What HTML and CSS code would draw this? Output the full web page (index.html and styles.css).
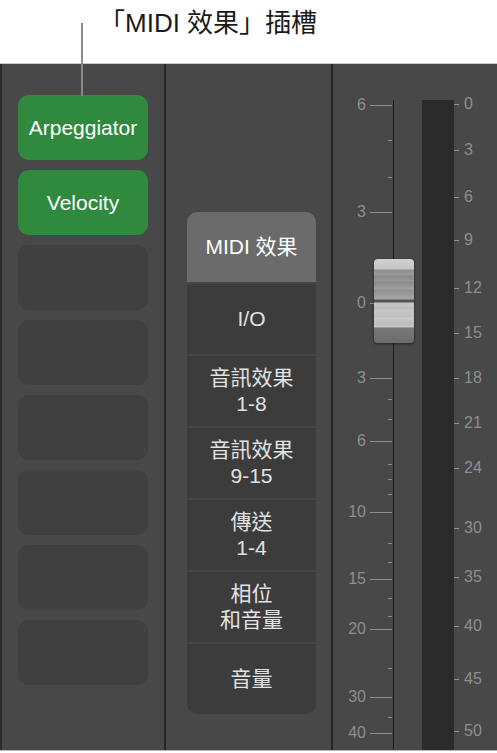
FILE: index.html
```html
<!DOCTYPE html>
<html>
<head>
    <title>MIDI 效果插槽</title>
    <link rel="stylesheet" href="styles.css">
</head>
<body>
    <div class="header">
        <div class="callout-text">「MIDI 效果」插槽</div>
        <div class="callout-line"></div>
    </div>

    <div class="panel">
        <div class="slots">
            <div class="slot active">Arpeggiator</div>
            <div class="slot active">Velocity</div>
            <div class="slot"></div>
            <div class="slot"></div>
            <div class="slot"></div>
            <div class="slot"></div>
            <div class="slot"></div>
            <div class="slot"></div>
        </div>

        <div class="middle">
            <div class="menu">
                <div class="menu-item selected">MIDI 效果</div>
                <div class="menu-item">I/O</div>
                <div class="menu-item">音訊效果<br>1-8</div>
                <div class="menu-item">音訊效果<br>9-15</div>
                <div class="menu-item">傳送<br>1-4</div>
                <div class="menu-item">相位<br>和音量</div>
                <div class="menu-item">音量</div>
            </div>
        </div>

        <div class="fader">
            <div class="track"></div>
            <div class="meter"></div>

            <!-- fader scale, dB -->
            <div class="mark" style="top:41px"><span>6</span><i class="tick"></i></div>
            <div class="mark minor" style="top:76px"><i class="tick"></i></div>
            <div class="mark minor" style="top:113px"><i class="tick"></i></div>
            <div class="mark" style="top:148px"><span>3</span><i class="tick"></i></div>
            <div class="mark" style="top:239px"><span>0</span><i class="tick short"></i></div>
            <div class="mark" style="top:314px"><span>3</span><i class="tick"></i></div>
            <div class="mark minor" style="top:335px"><i class="tick"></i></div>
            <div class="mark minor" style="top:355px"><i class="tick"></i></div>
            <div class="mark" style="top:377px"><span>6</span><i class="tick"></i></div>
            <div class="mark minor" style="top:400px"><i class="tick"></i></div>
            <div class="mark minor" style="top:415px"><i class="tick"></i></div>
            <div class="mark minor" style="top:430px"><i class="tick"></i></div>
            <div class="mark" style="top:448px"><span>10</span><i class="tick"></i></div>
            <div class="mark minor" style="top:479px"><i class="tick"></i></div>
            <div class="mark minor" style="top:498px"><i class="tick"></i></div>
            <div class="mark" style="top:515px"><span>15</span><i class="tick"></i></div>
            <div class="mark minor" style="top:534px"><i class="tick"></i></div>
            <div class="mark minor" style="top:552px"><i class="tick"></i></div>
            <div class="mark" style="top:565px"><span>20</span><i class="tick"></i></div>
            <div class="mark minor" style="top:604px"><i class="tick"></i></div>
            <div class="mark" style="top:633px"><span>30</span><i class="tick"></i></div>
            <div class="mark minor" style="top:653px"><i class="tick"></i></div>
            <div class="mark" style="top:669px"><span>40</span><i class="tick"></i></div>

            <!-- meter scale -->
            <div class="rmark" style="top:40px"><i class="tick"></i><span>0</span></div>
            <div class="rmark" style="top:86px"><i class="tick"></i><span>3</span></div>
            <div class="rmark" style="top:133px"><i class="tick"></i><span>6</span></div>
            <div class="rmark" style="top:176px"><i class="tick"></i><span>9</span></div>
            <div class="rmark" style="top:224px"><i class="tick"></i><span>12</span></div>
            <div class="rmark" style="top:269px"><i class="tick"></i><span>15</span></div>
            <div class="rmark" style="top:314px"><i class="tick"></i><span>18</span></div>
            <div class="rmark" style="top:359px"><i class="tick"></i><span>21</span></div>
            <div class="rmark" style="top:404px"><i class="tick"></i><span>24</span></div>
            <div class="rmark" style="top:464px"><i class="tick"></i><span>30</span></div>
            <div class="rmark" style="top:513px"><i class="tick"></i><span>35</span></div>
            <div class="rmark" style="top:562px"><i class="tick"></i><span>40</span></div>
            <div class="rmark" style="top:615px"><i class="tick"></i><span>45</span></div>
            <div class="rmark" style="top:667px"><i class="tick"></i><span>50</span></div>

            <div class="cap"></div>
        </div>
    </div>
</body>
</html>
```

FILE: styles.css
```css
body {
    margin: 0;
    background-color: #fff;
    font-family: "Liberation Sans", Inter, "Noto Sans CJK TC", sans-serif;
    width: 497px;
    height: 753px;
    overflow: hidden;
}

.header {
    position: relative;
    height: 63px;
}

.callout-text {
    position: absolute;
    left: 99px;
    top: 2px;
    font-size: 26px;
    color: #1a1a1a;
    white-space: nowrap;
}

.callout-line {
    position: absolute;
    left: 81px;
    top: 23px;
    width: 2px;
    height: 73px;
    background-color: #8a8a8a;
    z-index: 2;
}

.panel {
    display: flex;
    height: 686px;
    background-color: #484848;
    border-top: 1px solid #c9c9c9;
    border-bottom: 1px solid #b5b5b5;
}

.slots {
    width: 130px;
    padding: 31px 16px 0 16px;
    border-left: 2px solid #2c2c2c;
    border-right: 2px solid #262626;
    display: flex;
    flex-direction: column;
    gap: 10px;
}

.slot {
    height: 65px;
    border-radius: 11px;
    background-color: #404040;
    display: flex;
    align-items: center;
    justify-content: center;
    color: #fff;
    font-size: 21px;
}

.slot.active {
    background-color: #2f8a3e;
}

.middle {
    width: 165px;
    border-right: 2px solid #262626;
    padding-top: 148px;
}

.menu {
    width: 129px;
    margin-left: 21px;
    background-color: #3c3c3c;
    border-radius: 10px;
    overflow: hidden;
}

.menu-item {
    height: 70px;
    display: flex;
    align-items: center;
    justify-content: center;
    text-align: center;
    font-size: 21px;
    line-height: 26px;
    color: #e2e2e2;
    border-top: 2px solid #454545;
}

.menu-item.selected {
    background-color: #6b6b6b;
    color: #fff;
    border-top: none;
}

.fader {
    position: relative;
    flex: 1;
    overflow: hidden;
}

.track {
    position: absolute;
    left: 60px;
    top: 36px;
    width: 1px;
    height: 660px;
    background-color: #1c1c1c;
}

.meter {
    position: absolute;
    left: 89px;
    top: 36px;
    width: 32px;
    height: 660px;
    background-color: #2b2b2b;
}

.mark,
.rmark {
    position: absolute;
    height: 18px;
    margin-top: -9px;
    display: flex;
    align-items: center;
    font-size: 16px;
    color: #8e8e8e;
}

.mark {
    left: 0;
    width: 59px;
    justify-content: flex-end;
    gap: 4px;
}

.rmark {
    left: 121px;
    gap: 5px;
}

.tick {
    display: block;
    height: 1px;
    background-color: #8e8e8e;
}

.mark .tick {
    width: 22px;
}

.mark .tick.short {
    width: 4px;
    margin-right: 18px;
}

.mark.minor .tick {
    width: 4px;
}

.rmark .tick {
    width: 5px;
}

.cap {
    position: absolute;
    left: 41px;
    top: 195px;
    width: 40px;
    height: 84px;
    border-radius: 4px;
    box-shadow: 0 1px 3px rgba(0, 0, 0, 0.5);
    background: linear-gradient(to bottom,
        #d2d2d2 0, #c4c4c4 10px,
        #8e8e8e 11px, #9a9a9a 16px, #888 17px, #989898 22px, #8a8a8a 23px, #a0a0a0 30px, #909090 31px, #a6a6a6 40px,
        #525252 41px, #525252 43px,
        #c6c6c6 44px, #bdbdbd 50px, #c8c8c8 51px, #c0c0c0 58px, #cacaca 59px, #bcbcbc 66px, #c6c6c6 67px, #c2c2c2 68px,
        #777 69px, #6c6c6c 84px);
}
```
